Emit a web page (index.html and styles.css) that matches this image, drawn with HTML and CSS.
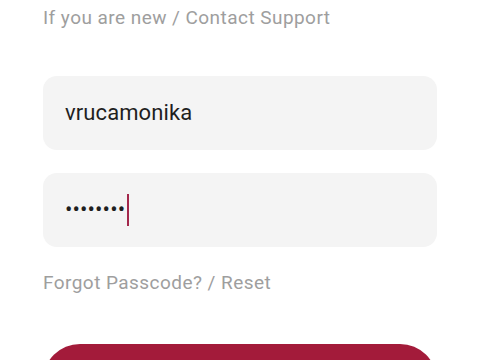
FILE: index.html
```html
<!DOCTYPE html>
<html>
<head>
<meta charset="utf-8">
<link rel="stylesheet" href="styles.css">
</head>
<body>
<div class="page">
  <p class="hint hint-top">If you are new / Contact Support</p>
  <div class="field field-user"><span class="value">vrucamonika</span></div>
  <div class="field field-pass"><span class="dots">••••••••</span><span class="caret"></span></div>
  <p class="hint hint-forgot">Forgot Passcode? / Reset</p>
  <div class="button"></div>
</div>
</body>
</html>
```
FILE: styles.css
```css
html, body {
  margin: 0;
  padding: 0;
  background: #ffffff;
  overflow: hidden;
  height: 360px;
}
.page {
  padding: 6px 43px 0 43px;
  font-family: Roboto, "Noto Sans", sans-serif;
  display: flex;
  flex-direction: column;
}
.hint {
  margin: 0;
  font-size: 19px;
  line-height: 24px;
  color: #9e9e9e;
  letter-spacing: 0.45px;
}
.hint-top {
  margin-bottom: 46px;
}
.field {
  height: 74px;
  flex: none;
  background: #f4f4f4;
  border-radius: 14px;
  display: flex;
  align-items: center;
  padding: 0 22px;
  box-sizing: border-box;
  font-size: 22px;
  color: #1f1f1f;
}
.field-user {
  margin-bottom: 23px;
}
.value {
  line-height: 26px;
  letter-spacing: 0.1px;
}
.dots {
  font-size: 22px;
  line-height: 26px;
  letter-spacing: 0.1px;
}
.caret {
  width: 2px;
  height: 32px;
  background: #a3284c;
  margin-left: 2px;
}
.hint-forgot {
  margin-top: 24px;
}
.button {
  flex: none;
  margin-top: 49px;
  height: 74px;
  border-radius: 37px;
  background: #a31b3a;
}
```
